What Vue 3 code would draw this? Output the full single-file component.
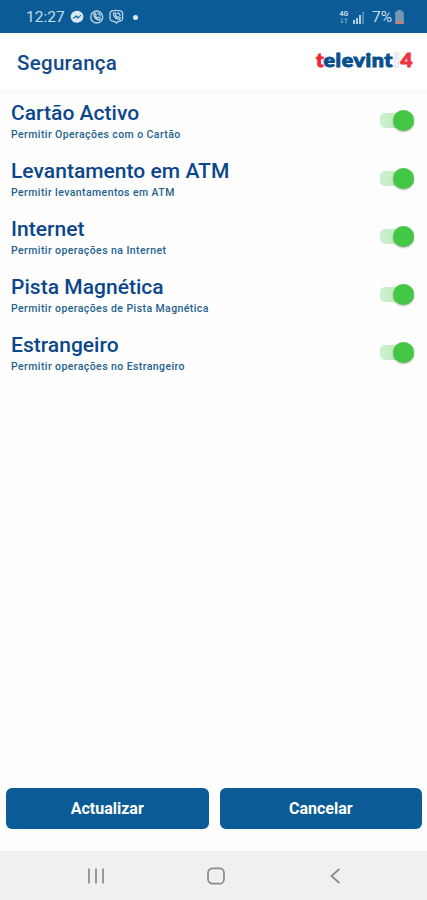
<template>
  <div class="screen">
    <!-- Status bar -->
    <div class="status-bar">
      <span class="clock">12:27</span>
      <svg class="status-icons" width="64" height="16" viewBox="0 0 64 16">
        <ellipse cx="8" cy="7.8" rx="6.4" ry="6" fill="#d8e9f5" />
        <path d="M4 13.5V11h3z" fill="#d8e9f5" />
        <path d="M4 9.6 7 6.5l2 1.8L12 6.2 9 9.4 7 7.8z" fill="#0b5c96" stroke="#0b5c96" stroke-width=".6" />
        <g fill="none" stroke="#b9d5e8" stroke-width="1.3">
          <circle cx="27.7" cy="8" r="6" />
          <path d="M24.8 5.2c-.6 2.6 2.8 6.1 5.7 5.8l.8-1.6-2-1.1-1 .8-1.9-1.9.7-1.1-1-1.8zM28.2 4.4c2 0 3.200 1.300 3.300 3.200" />
          <path d="M42.800 1.900q4.500-.9 9 0 1.600.5 1.800 2.400v5.200q-.2 2-1.800 2.400l-3.200.9-1.300 1.200-1.300-1.200-3.200-.9q-1.600-.4-1.800-2.400V4.300q.2-1.900 1.800-2.400z" />
          <path d="M44.500 4.200c-.8 2.800 2.900 6.600 6 6.200l.8-1.600-2-1.100-1 .8-1.900-1.900.8-1.100-1-1.700zM48.100 4c2 0 2.900 1.200 3 3" />
        </g>
      </svg>
      <span class="more-dot"></span>
      <span class="network">
        <span class="network-label">4G</span>
        <svg width="8" height="6" viewBox="0 0 8 6">
          <path d="M2 0v5M.6 3.500 2 5l1.400-1.500M6 5.500V.5M4.600 2 6 .5 7.400 2" fill="none" stroke="#7eaccb" stroke-width=".9" />
        </svg>
      </span>
      <svg class="signal" width="12" height="13" viewBox="0 0 12 13">
        <path d="M0 9h2v4H0zM3 7h2v6H3zM6 4h2v9H6z" fill="#b3cfe1" />
        <path d="M9 1h2v12H9z" fill="#5089b5" />
      </svg>
      <span class="battery-level">7%</span>
      <svg class="battery" width="9" height="14" viewBox="0 0 9 14">
        <path d="M2.500 0h4v1.500H8q.8 0 .8.800V13q0 .8-.8.800H1q-.8 0-.8-.8V2.300q0-.8.800-.8h1.500z" fill="#7796b2" />
        <path d="M.2 11.500h8.600V13q0 .8-.8.800H1q-.8 0-.8-.8z" fill="#d08275" />
      </svg>
    </div>

    <!-- Header -->
    <header class="header">
      <h1 class="page-title">Segurança</h1>
      <svg class="logo" width="100" height="24" viewBox="0 0 100 24">
        <g class="logo-text">
          <text x="1" y="17" textLength="7.500" lengthAdjust="spacingAndGlyphs" fill="#ed2738" stroke="#ed2738">t</text>
          <text class="logo-name" x="8.500" y="17" textLength="69.500" lengthAdjust="spacingAndGlyphs" fill="#07508d" stroke="#07508d">elevint</text>
          <text x="85.500" y="17" textLength="12" lengthAdjust="spacingAndGlyphs" fill="#ed3441" stroke="#ed3441">4</text>
        </g>
        <g fill="#f4f4f6" stroke="#d3d5da" stroke-width=".8">
          <circle cx="81.500" cy="4.300" r="2" />
          <rect x="79.300" y="7.500" width="4.400" height="10" rx="2" />
        </g>
      </svg>
    </header>

    <!-- Card permissions -->
    <main class="options">
      <div v-for="option in options" :key="option.title" class="option">
        <div class="option-text">
          <div class="option-title">{{ option.title }}</div>
          <div class="option-description">{{ option.description }}</div>
        </div>
        <button
          class="toggle"
          :class="{ active: option.enabled }"
          role="switch"
          :aria-checked="option.enabled"
          :aria-label="option.title"
          @click="option.enabled = !option.enabled"
        >
          <span class="toggle-thumb"></span>
        </button>
      </div>
    </main>

    <!-- Actions -->
    <div class="actions">
      <button class="btn">Actualizar</button>
      <button class="btn">Cancelar</button>
    </div>

    <!-- Navigation bar -->
    <nav class="nav-bar">
      <svg width="18" height="18" viewBox="0 0 18 18">
        <path d="M2 1.500v15M9 1.500v15M16 1.500v15" />
      </svg>
      <svg width="18" height="18" viewBox="0 0 18 18">
        <rect x="1" y="1.300" width="16" height="15.400" rx="4.500" />
      </svg>
      <svg width="18" height="18" viewBox="0 0 18 18">
        <path d="M13.300 2 5.500 9l7.800 7" />
      </svg>
    </nav>
  </div>
</template>

<script setup>
import { ref } from 'vue'

const options = ref([
  { title: 'Cartão Activo', description: 'Permitir Operações com o Cartão', enabled: true },
  { title: 'Levantamento em ATM', description: 'Permitir levantamentos em ATM', enabled: true },
  { title: 'Internet', description: 'Permitir operações na Internet', enabled: true },
  { title: 'Pista Magnética', description: 'Permitir operações de Pista Magnética', enabled: true },
  { title: 'Estrangeiro', description: 'Permitir operações no Estrangeiro', enabled: true }
])
</script>

<style>
body {
  margin: 0;
}
</style>

<style scoped>
.screen {
  width: 100%;
  height: 900px;
  display: flex;
  flex-direction: column;
  background: #fefefe;
  font-family: Roboto, sans-serif;
  overflow: hidden;
}

.status-bar {
  height: 33px;
  box-sizing: border-box;
  padding: 1px 23px 0 26px;
  display: flex;
  align-items: center;
  background: #0b5c96;
  color: #c6dcea;
  font-size: 15.5px;
}

.clock {
  width: 38px;
  white-space: nowrap;
}

.status-icons {
  margin-left: 5px;
}

.more-dot {
  width: 5px;
  height: 5px;
  border-radius: 50%;
  background: #d8e9f5;
}

.network {
  margin-left: auto;
  width: 10px;
  display: flex;
  flex-direction: column;
  align-items: center;
}

.network-label {
  font-size: 7px;
  line-height: 7px;
  font-weight: 700;
}

.signal {
  margin-left: 4px;
}

.battery-level {
  margin-left: 7px;
  width: 23px;
  white-space: nowrap;
}

.header {
  height: 57px;
  box-sizing: border-box;
  padding: 0 12px 0 17px;
  display: flex;
  align-items: center;
  justify-content: space-between;
  background: #fff;
}

.page-title {
  margin: 2px 0 0;
  color: #12498a;
  font-size: 20.5px;
  font-weight: 500;
  letter-spacing: 0.3px;
}

.logo-text {
  font-family: Lato, sans-serif;
  font-size: 18px;
  font-weight: 900;
  stroke-width: 0.9px;
}

.logo-name {
  letter-spacing: 0.5px;
}

.options {
  flex: 1;
  padding-top: 4px;
  border-top: 4px solid #f8f8f8;
}

.option {
  height: 58px;
  box-sizing: border-box;
  padding: 3px 13px 0 11px;
  display: flex;
  justify-content: space-between;
}

.option-title {
  color: #0c468c;
  font-size: 21px;
  line-height: 24px;
  font-weight: 500;
  letter-spacing: 0.03px;
}

.option-description {
  color: #23618f;
  font-size: 10.5px;
  line-height: 12px;
  font-weight: 500;
  margin-top: 4px;
  letter-spacing: 0.42px;
}

.toggle {
  width: 34px;
  height: 15px;
  margin-top: 11.5px;
  padding: 0;
  border: 0;
  border-radius: 5px;
  display: flex;
  align-items: center;
  background: linear-gradient(#d0d0d0, #d0d0d0);
  cursor: pointer;
}

.toggle.active {
  justify-content: flex-end;
  background-image: linear-gradient(90deg, #cdf1cf, #b4e8b6);
}

.toggle-thumb {
  flex: none;
  width: 21px;
  height: 21px;
  border-radius: 50%;
  background: #999;
  box-shadow: 0 1px 2px rgba(0, 0, 0, 0.3);
}

.toggle.active .toggle-thumb {
  background: #43c745;
}

.actions {
  padding: 0 5px 22px 6px;
  display: grid;
  grid-template-columns: 1fr 1fr;
  gap: 11px;
}

.btn {
  height: 41px;
  padding: 0;
  border: 0;
  border-radius: 6px;
  background: #0b5c96;
  color: #fff;
  font-family: inherit;
  font-size: 16px;
  font-weight: 700;
  cursor: pointer;
}

.nav-bar {
  height: 49px;
  box-sizing: border-box;
  padding: 0 83px 0 87px;
  display: flex;
  align-items: center;
  justify-content: space-between;
  background: #f0f0f0;
}

.nav-bar svg {
  fill: none;
  stroke: #8a8a8a;
  stroke-width: 1.7;
}
</style>
